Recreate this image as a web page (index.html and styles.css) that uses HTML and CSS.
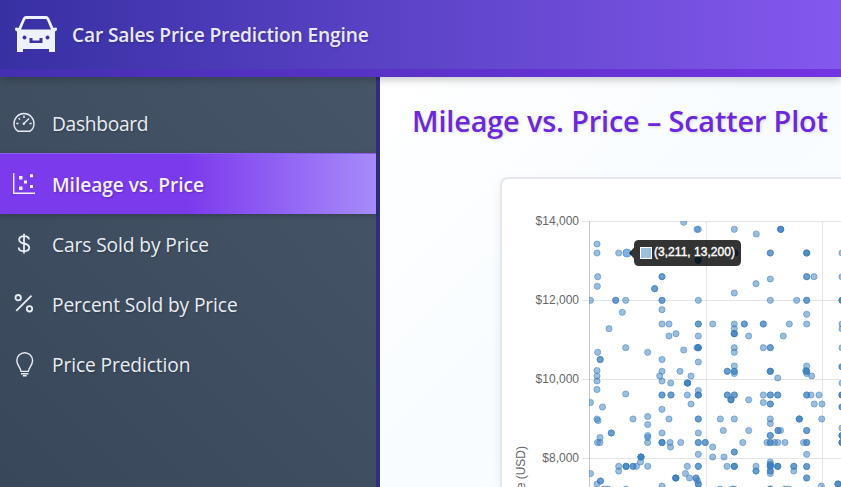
FILE: index.html
```html
<!DOCTYPE html>
<html lang="en">
<head>
<meta charset="utf-8">
<title>Car Sales Price Prediction Engine</title>
<link rel="stylesheet" href="styles.css">
</head>
<body>
<header class="header">
  <svg class="logo" viewBox="0 0 42 37">
    <path fill-rule="evenodd" d="M11 0H31Q33 0 34 2L38.5 12L41 11.5Q42 11.5 42 13Q42 15 40 15.5V36H34V33H8V36H2V15.5Q0 15 0 13Q0 11.5 1 11.5L3.500 12L8 2Q9 0 11 0ZM11.500 3Q10.500 3 10 4L6 13.500H36L32 4Q31.500 3 30.500 3ZM9.500 19.500a2 2 0 1 0 .01 4a2 2 0 1 0-.01-4ZM32.500 19.500a2 2 0 1 0 .01 4a2 2 0 1 0-.01-4ZM14.500 22V27H27.500V22H24.500V24.500H17.500V22Z"/>
  </svg>
  <h1 class="brand">Car Sales Price Prediction Engine</h1>
</header>
<div class="layout">
  <nav class="sidebar">
    <a class="item">
      <svg class="icon" viewBox="0 0 22 22"><path d="M5 19.200H17C19.800 17.500 21 14.500 21 11.500A10 10 0 0 0 1 11.500C1 14.500 2.200 17.500 5 19.200ZM11 3.500V6M3.300 11.500H5.500M16.500 11.500H18.700M5.600 6.200L7 7.600M11 11.500L16 6.500"/><circle class="solid" cx="10.800" cy="11.700" r="1.200"/></svg>
      <span class="tight">Dashboard</span></a>
    <a class="item active">
      <svg class="icon" viewBox="0 0 22 22"><path d="M.7 0V20.300H22"/><path class="solid" d="M6 3h3.500v3.500H6ZM17 1.300h3v3h-3ZM11 7.500h3v3h-3ZM17 12h3v3h-3ZM6 13.500h3.500v3.500H6Z"/></svg>
      <span>Mileage vs. Price</span></a>
    <a class="item">
      <svg class="icon" viewBox="0 0 22 22"><path class="thick" d="M11 .8V20.500M16 6.400C15.800 4.300 13.800 3.100 11 3.100C8.200 3.100 6.200 4.500 6.200 6.700C6.200 9 8 9.800 11 10.500C14.500 11.300 16.200 12.200 16.200 14.600C16.200 17 14.200 18.300 11 18.300C7.800 18.300 5.800 16.800 5.600 14.500"/></svg>
      <span>Cars Sold by Price</span></a>
    <a class="item">
      <svg class="icon" viewBox="0 0 22 22"><path class="thick" d="M18.500 2.600L3.200 17.800"/><circle class="thick" cx="5.200" cy="4.700" r="2.700"/><circle class="thick" cx="16.500" cy="15.800" r="2.700"/></svg>
      <span>Percent Sold by Price</span></a>
    <a class="item">
      <svg class="icon bulb" viewBox="0 0 22 25"><path d="M8 19.400C8 16.500 3.800 13.200 3.800 8.600A7.900 7.900 0 0 1 19.600 8.600C19.600 13.200 15.400 16.500 15.400 19.400Z"/><path d="M8 21.800H15.400M9.800 23.700H13.600"/></svg>
      <span>Price Prediction</span></a>
  </nav>
  <main class="main">
    <h2 class="title">Mileage vs. Price – Scatter Plot</h2>
    <section class="card">
      <svg class="chart" id="chart" viewBox="502 179 339 308">
        <defs><clipPath id="area"><rect x="589" y="221" width="252" height="266"/></clipPath></defs>
        <g class="grid">
          <path d="M582 221.500H841M582 300.500H841M582 379.500H841M582 458.500H841M706.500 221V487M822.500 221V487"/>
          <path class="axis" d="M589.500 221V487"/>
        </g>
        <g class="labels">
          <text x="579" y="225.300">$14,000</text><text x="579" y="304.300">$12,000</text>
          <text x="579" y="383.300">$10,000</text><text x="579" y="462.300">$8,000</text>
          <text class="ytitle" transform="translate(525 446) rotate(-90)">Price (USD)</text>
        </g>
        <g id="points" clip-path="url(#area)"></g>
        <circle class="hover" cx="627" cy="253" r="4"/>
        <g class="tip">
          <path d="M629 253L634 247.500V245Q634 240 639 240H736Q741 240 741 245V261Q741 266 736 266H639Q634 266 634 261V258.500Z"/>
          <rect class="swatch" x="640.500" y="247.500" width="11" height="11"/>
          <text x="654" y="256" textLength="81">(3,211, 13,200)</text>
        </g>
      </svg>
    </section>
  </main>
</div>
<script src="chart.js"></script>
</body>
</html>
```
FILE: styles.css
```css
* { box-sizing: border-box; }
body { margin: 0; height: 487px; overflow: hidden; display: flex; flex-direction: column; font-family: "Open Sans", "Noto Sans", sans-serif; }
.header { position: relative; z-index: 2; height: 77px; flex: none; display: flex; align-items: center; padding: 0 0 8px 15px; gap: 15px;
  background: linear-gradient(90deg, #4330b0, #7434e2) 0 69px / 100% 8px no-repeat, linear-gradient(90deg, #3730a3, #8458ee);
  box-shadow: 0 3px 8px rgba(0,0,0,.22); }
.logo { width: 42px; height: 37px; fill: #eef2ff; }
.brand { margin: 0; font-size: 19.2px; font-weight: 600; color: #e9e9fd; white-space: nowrap; letter-spacing: -.16px; text-shadow: 1px 1px 2px rgba(0,0,0,.22); }
.layout { flex: 1; display: flex; min-height: 0; }
.sidebar { width: 380px; flex: none; padding-top: 16px; border-right: 4px solid #312e81; background: linear-gradient(45deg, #38475a, #475569) padding-box; }
.item { display: flex; align-items: center; height: 60px; padding: 0 13px; gap: 17px; color: #e8edf3; font-size: 19.2px; white-space: nowrap; letter-spacing: -.11px; text-shadow: 1px 1px 2px rgba(0,0,0,.25); }
.tight { letter-spacing: -.31px; }
.active { height: 61px; border-top: 1px solid #8f5cf3; color: #f3efff; font-weight: 600; background: linear-gradient(90deg, #7c3aed 50%, #a78bfa); box-shadow: 0 2px 5px rgba(0,0,0,.2); }
.active span { letter-spacing: -.07px; }
.icon { width: 22px; height: 22px; flex: none; fill: none; stroke: currentColor; stroke-width: 1.4; }
.bulb { height: 25px; }
.icon .thick { stroke-width: 1.8; }
.icon .solid { fill: currentColor; stroke: none; }
.main { flex: 1; min-width: 0; display: flex; flex-direction: column; overflow: hidden; background: linear-gradient(135deg, #fff 0%, #f8fcff 50%, #fff 100%); }
.title { flex: none; margin: 24px 0 0 32px; height: 40px; line-height: 40px; color: #6d28d9; font-size: 28.8px; font-weight: 600; white-space: nowrap; letter-spacing: -.13px; text-shadow: 1px 1px 3px rgba(0,0,0,.15); }
.card { flex: 1; margin: 36px 0 0 120px; border: 2px solid #e5e7eb; border-width: 2px 0 0 2px; border-top-left-radius: 8px; background: #fff; box-shadow: 0 4px 12px rgba(0,0,0,.06); }
.chart { display: block; width: 339px; height: 308px; font-family: "Liberation Sans", sans-serif; font-size: 12px; }
.grid { fill: none; stroke: #e5e5e5; stroke-width: 1; }
.axis { stroke: #c7c7c7; }
.labels { fill: #666; text-anchor: end; }
.labels .ytitle { text-anchor: end; }
#points circle { fill: rgba(58,125,190,.5); stroke: rgba(58,125,190,.5); stroke-width: 1; }
.hover { fill: #7eb2e6; stroke: #5f9fe0; }
.tip { fill: rgba(0,0,0,.8); }
.tip text { fill: #fff; stroke: #fff; stroke-width: .4; }
.tip .swatch { fill: #9dbede; stroke: #fff; }
```
FILE: chart.js
```js
// Each row: y, then x positions; "x*n" marks n overlapping sales.
const rows = `
222.3 683.7
229.3 697 698.3 734.3 780.7*3
234 756.3
244 597
253 597 618.7 735*3 770.3*2 806.7*3 842
260.3 698.3*4
276.7 597.7 662*2 806.7*2 814 842
279 770.3
283.7 756
286.3 597.3
288.7 654.7*2
293 734.3
300.3 590.5 615.7*2 625.7 662*2 698.3 770.3 796.7 806.7*2 842*3
309.7 662
312.3 622.3
314.3 806.7
324 662 669 698.3*2 712.7 734.3 744.3*2 763.3*2 789.3 806.7 842
328.7 609 734.3 842
333.7 676 734.3*3
336 669 698.3 748.7 783.3
347.7 625.7 697 698.3*3 734.3 763.3 770.3*2 842
350 683.7
352.3 597.7 647.7 734.3
359.5 600.2*2 662
362 698.3
366 734.3 806.7
366.7 842*2
370.5 597 805.8
371.3 662 680 727.3*2 734.3*2 770.3*3 806.7*2
373.5 734.3 806.7
376 597 659.7 691 811.7
378 777.7
381 597 662
383 670.7 687.5*4 842
389.5 597
390.5 698.3
394 625.7
395 662*2 671*2 687.3 698.3*3 727.3*2 734.3*2 763.3 770.3*2 777.7*2 806.7*2 811 819 842*3
399.8 731*3 748.7
402.5 590.5 763.3
404 691 770.3*2 814.3 822
407 602.5 842*2
409.3 662
416.5 647.7
419 597 633 669 698.3*2 720.3 734.3 770.3 799.3*3 821.7
420.5 598
423.5 770.3
424.5 647.7
428 842
430.5 723.3 748.7 778*2 780.5 806.7*2
433 611.3*2 662 698.3
435.5 647.7 770.3*2 842*3
437.5 600 647.7
442.5 597.5 600 647.7 662*3 670 680.7 698.3*2 705.3*2 742.8 767 770.3*2 774.5 777.7 785 803.5 806.7*2 842*3
447 670.5 712.7
452 734.3*2
454.3 698.3 806.7
457 641*4 712.7 724
462 640.5 770.3
464.5 770.3*2
466.3 618.7 626*3 633*2 636.5 647.7 687.3 698.3*2 727 734.3*3 756 770.3*3 777.7*3 793.8*2
471 618.7 756*2 770.3*2 793.8
466.5 806.7*2
473.5 590.5 685.5 770.3
478 675.8*4 689.5 696*2 806.7*2
481 600.5*2 697.5
484 597 698.3*2 838*3
486 662 821.3
489 604 608 626 698.3 720 732 734.3 770.3*2 785 789
`;
const group = document.getElementById("points");
for (const row of rows.trim().split("\n")) {
  const [y, ...xs] = row.split(" ");
  for (const entry of xs) {
    const [x, n] = entry.split("*");
    for (let i = 0; i < (Number(n) || 1); i++) {
      const dot = document.createElementNS("http://www.w3.org/2000/svg", "circle");
      dot.setAttribute("cx", x);
      dot.setAttribute("cy", y);
      dot.setAttribute("r", 3.1);
      group.append(dot);
    }
  }
}
```
